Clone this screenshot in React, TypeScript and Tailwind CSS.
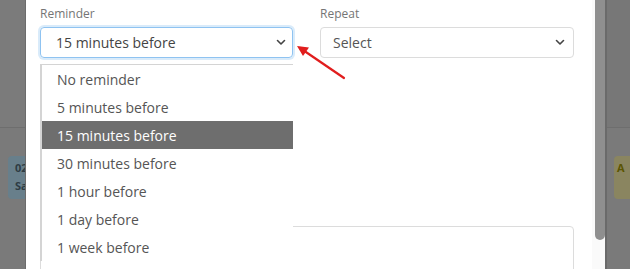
import React from "react";

const items = [
  "No reminder",
  "5 minutes before",
  "15 minutes before",
  "30 minutes before",
  "1 hour before",
  "1 day before",
  "1 week before",
];

function Chevron() {
  return (
    <svg width="10" height="7" viewBox="0 0 10 7" className="shrink-0">
      <path d="M1.5 1.5 L5 5 L8.5 1.5" fill="none" stroke="#444" strokeWidth="1.6" strokeLinecap="round" strokeLinejoin="round" />
    </svg>
  );
}

export default function App() {
  return (
    <div
      className="w-[630px] h-[269px] overflow-hidden flex bg-[#7a7a7a]"
      style={{ fontFamily: '"Open Sans", "Noto Sans", sans-serif' }}
    >
      {/* left backdrop */}
      <div className="w-[26px] shrink-0 flex flex-col border-r border-[#6c6c6c]">
        <div className="h-[128px] bg-[#7b7b7b] border-b border-[#6e6e6e]" />
        <div className="mt-[28px] ml-[8px] h-[43px] rounded-l-[4px] bg-[#687f8b] pl-[7px] pt-[3px] text-[11px] font-bold leading-[18px] text-[#2e3c44] overflow-hidden whitespace-nowrap">
          <div>02</div>
          <div>Sa</div>
        </div>
      </div>

      {/* modal */}
      <div className="w-[579px] shrink-0 bg-white flex">
        <div className="relative flex-1 pl-[14px] pr-[18px] pt-[6px]">
          <div className="grid grid-cols-[253px_254px] gap-x-[27px]">
            <div className="flex flex-col">
              <div className="text-[12px] leading-[16px] text-[#757575]">Reminder</div>
              <div className="mt-[5px] h-[31px] rounded-[4px] border border-[#8fc3f1] shadow-[0_0_0_2px_rgba(170,210,245,0.45)] flex items-center justify-between pl-[15px] pr-[6px] text-[14px] text-[#444]">
                <span>15 minutes before</span>
                <Chevron />
              </div>
            </div>
            <div className="flex flex-col">
              <div className="text-[12px] leading-[16px] text-[#757575]">Repeat</div>
              <div className="mt-[5px] h-[31px] rounded-[4px] border border-[#dcdcdc] flex items-center justify-between pl-[12px] pr-[8px] text-[14px] text-[#555]">
                <span>Select</span>
                <Chevron />
              </div>
            </div>
          </div>

          {/* textarea (partially hidden) */}
          <div className="mt-[168px] h-[60px] rounded-[4px] border border-[#dcdcdc]" />

          {/* dropdown list */}
          <div className="absolute left-[14px] top-[64px] w-[253px] bg-white border-l-2 border-t border-[#d4d4d4]">
            {items.map((t) => (
              <div
                key={t}
                className={
                  t === "15 minutes before"
                    ? "h-[28px] flex items-center pl-[15px] text-[14px] bg-[#6e6e6e] text-white"
                    : "h-[28px] flex items-center pl-[15px] text-[14px] text-[#555]"
                }
              >
                {t}
              </div>
            ))}
          </div>

          {/* red arrow */}
          <svg className="absolute left-[266px] top-[38px]" width="60" height="46" viewBox="0 0 60 46">
            <line x1="52" y1="40" x2="8" y2="10" stroke="#e11d1d" strokeWidth="2.2" strokeLinecap="round" />
            <path d="M5 8 L17 9.5 L11 18 Z" fill="#e11d1d" />
          </svg>
        </div>

        {/* scrollbar */}
        <div className="w-[14px] shrink-0 bg-[#fafafa] pl-[3px] pr-[1px]">
          <div className="w-[10px] h-[240px] bg-[#8f8f8f] rounded-b-[5px]" />
        </div>
      </div>

      {/* right backdrop */}
      <div className="flex-1 flex flex-col border-l-2 border-[#6a6a6a]">
        <div className="h-[128px] bg-[#777] border-b border-[#6e6e6e]" />
        <div className="mt-[28px] ml-[7px] h-[43px] rounded-l-[4px] bg-[#8a8560] pl-[3px] pt-[3px] text-[11px] font-bold leading-[18px] text-[#5b5400] overflow-hidden">
          A
        </div>
      </div>
    </div>
  );
}
